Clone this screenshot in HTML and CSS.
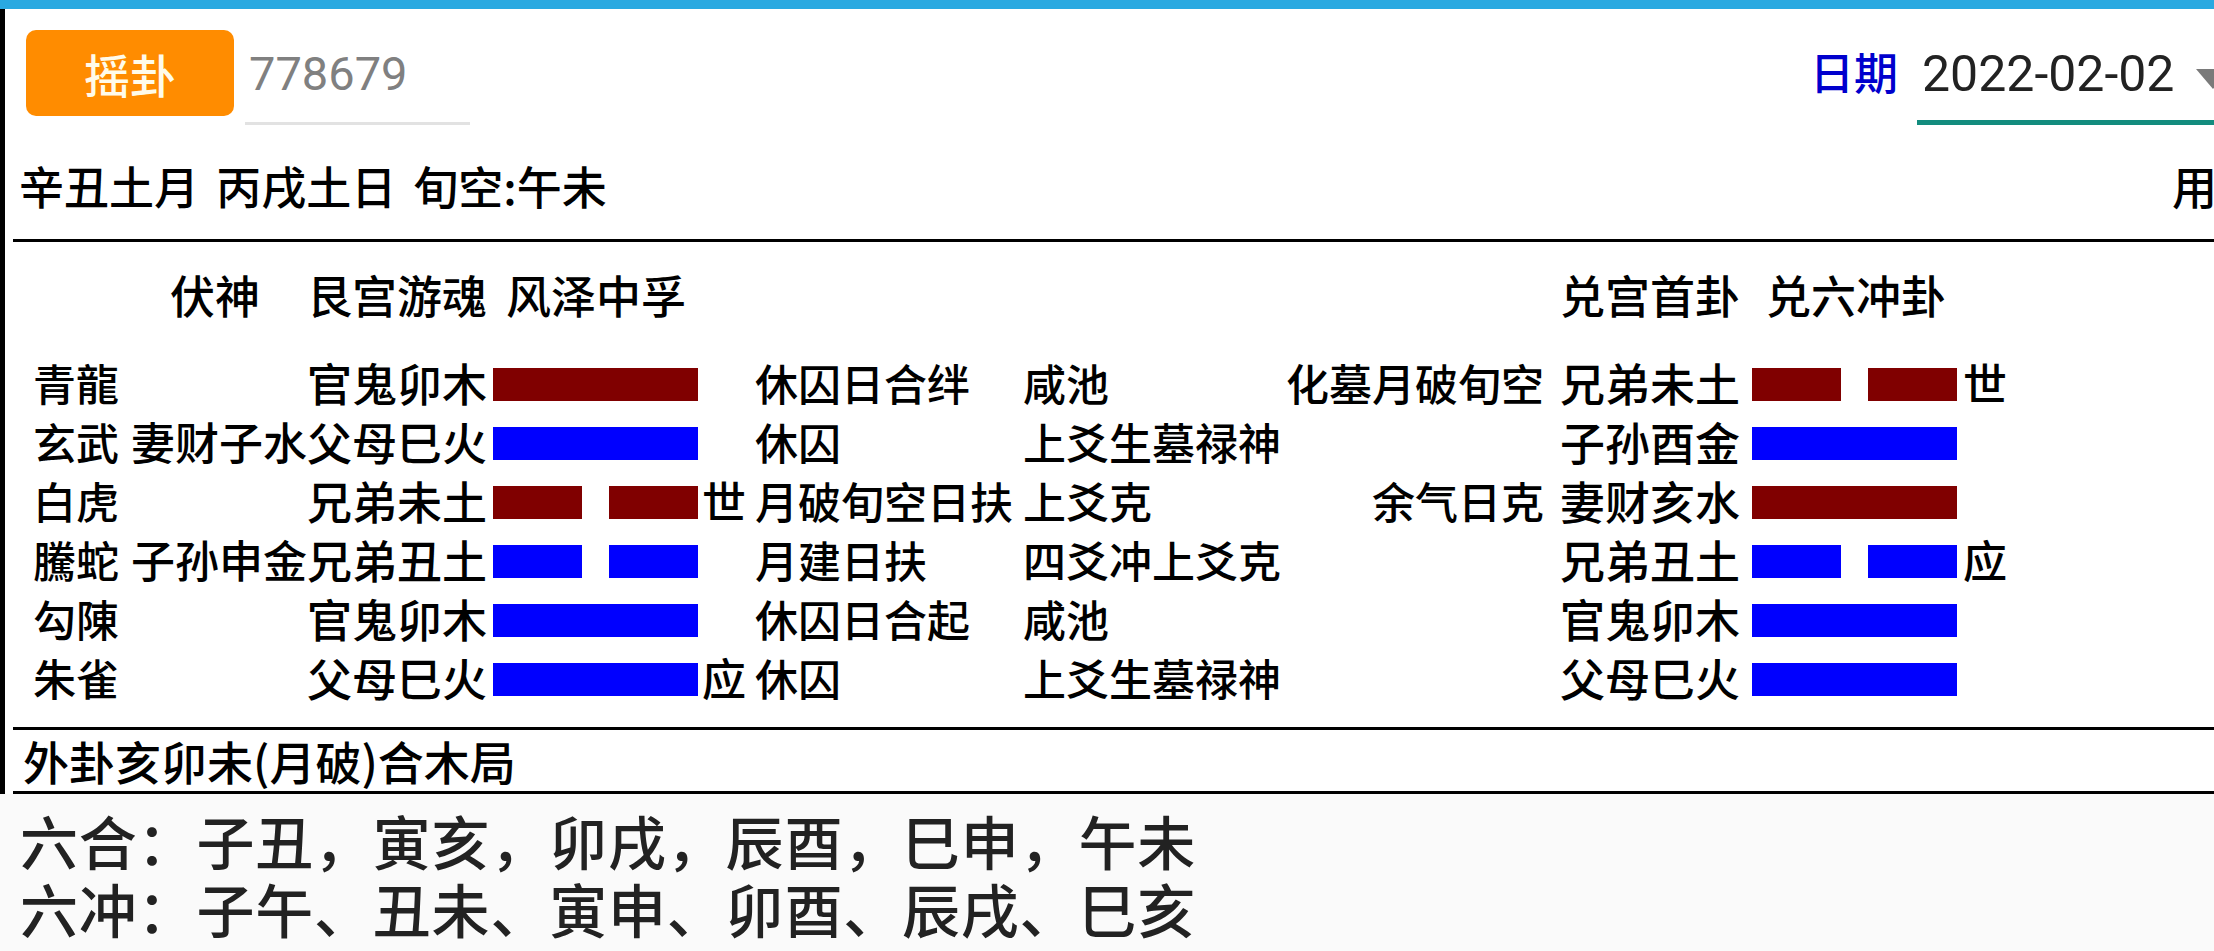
FILE: index.html
```html
<!DOCTYPE html>
<html lang="zh-CN">
<head>
<meta charset="utf-8">
<title>摇卦</title>
<link rel="stylesheet" href="styles.css">
</head>
<body>
<div class="topbar"></div>
<div class="main">
  <div class="toolbar">
    <button class="btn-shake">摇卦</button>
    <div class="num-field">778679</div>
    <div class="date-group">
      <span class="date-label">日期</span>
      <div class="date-field"><span class="date-value">2022-02-02</span><span class="caret"></span></div>
    </div>
  </div>
  <div class="status">
    <div class="status-left">辛丑土月 丙戌土日 旬空:午未</div>
    <div class="status-right">用神</div>
  </div>
  <div class="rule"></div>
  <div class="gua">
    <div class="gua-grid gua-head">
      <div class="head-fushen">伏神</div>
      <div class="head-left"><span>艮宫游魂</span><span>风泽中孚</span></div>
      <div class="head-right"><span>兑宫首卦</span><span>兑六冲卦</span></div>
    </div>

    <div class="gua-grid yao-row">
      <div class="c-god">青龍</div>
      <div class="c-name">官鬼卯木</div>
      <div class="c-bar line yang red"><i></i></div>
      <div class="c-state">休囚日合绊</div>
      <div class="c-move">咸池</div>
      <div class="c-info">化墓月破旬空</div>
      <div class="c-bname">兄弟未土</div>
      <div class="c-bbar line yin red"><i></i><i></i></div>
      <div class="c-bmark">世</div>
    </div>

    <div class="gua-grid yao-row">
      <div class="c-god">玄武</div>
      <div class="c-fu">妻财子水</div>
      <div class="c-name">父母巳火</div>
      <div class="c-bar line yang blue"><i></i></div>
      <div class="c-state">休囚</div>
      <div class="c-move">上爻生墓禄神</div>
      <div class="c-bname">子孙酉金</div>
      <div class="c-bbar line yang blue"><i></i></div>
    </div>

    <div class="gua-grid yao-row">
      <div class="c-god">白虎</div>
      <div class="c-name">兄弟未土</div>
      <div class="c-bar line yin red"><i></i><i></i></div>
      <div class="c-mark">世</div>
      <div class="c-state">月破旬空日扶</div>
      <div class="c-move">上爻克</div>
      <div class="c-info">余气日克</div>
      <div class="c-bname">妻财亥水</div>
      <div class="c-bbar line yang red"><i></i></div>
    </div>

    <div class="gua-grid yao-row">
      <div class="c-god">騰蛇</div>
      <div class="c-fu">子孙申金</div>
      <div class="c-name">兄弟丑土</div>
      <div class="c-bar line yin blue"><i></i><i></i></div>
      <div class="c-state">月建日扶</div>
      <div class="c-move">四爻冲上爻克</div>
      <div class="c-bname">兄弟丑土</div>
      <div class="c-bbar line yin blue"><i></i><i></i></div>
      <div class="c-bmark">应</div>
    </div>

    <div class="gua-grid yao-row">
      <div class="c-god">勾陳</div>
      <div class="c-name">官鬼卯木</div>
      <div class="c-bar line yang blue"><i></i></div>
      <div class="c-state">休囚日合起</div>
      <div class="c-move">咸池</div>
      <div class="c-bname">官鬼卯木</div>
      <div class="c-bbar line yang blue"><i></i></div>
    </div>

    <div class="gua-grid yao-row">
      <div class="c-god">朱雀</div>
      <div class="c-name">父母巳火</div>
      <div class="c-bar line yang blue"><i></i></div>
      <div class="c-mark">应</div>
      <div class="c-state">休囚</div>
      <div class="c-move">上爻生墓禄神</div>
      <div class="c-bname">父母巳火</div>
      <div class="c-bbar line yang blue"><i></i></div>
    </div>
  </div>
  <div class="rule"></div>
  <div class="summary">外卦亥卯未(月破)合木局</div>
  <div class="rule"></div>
</div>
<div class="footer">
  <div class="footer-line">六合：子丑，寅亥，卯戌，辰酉，巳申，午未</div>
  <div class="footer-line">六冲：子午、丑未、寅申、卯酉、辰戌、巳亥</div>
</div>
</body>
</html>
```

FILE: styles.css
```css
html, body {
  margin: 0;
  padding: 0;
}

body {
  width: 2214px;
  height: 951px;
  overflow: hidden;
  background: #ffffff;
  color: #000000;
  font-family: "Noto Sans CJK SC", "Noto Sans", sans-serif;
  font-size: 44px;
  font-weight: 500;
}

.topbar {
  height: 9px;
  background: #29a9e1;
}

.main {
  border-left: 5px solid #000000;
  overflow: hidden;
}

/* ---------- toolbar ---------- */
.toolbar {
  display: flex;
  align-items: flex-start;
  height: 121px;
  box-sizing: border-box;
  padding-top: 21px;
}

.btn-shake {
  width: 208px;
  height: 86px;
  margin: 0 0 0 21px;
  padding: 0;
  border: none;
  border-radius: 10px;
  background: #ff8c00;
  color: #fffbea;
  font-family: "Noto Sans CJK SC", sans-serif;
  font-size: 46px;
  font-weight: 500;
  line-height: 86px;
}

.num-field {
  width: 225px;
  height: 95px;
  box-sizing: border-box;
  margin-left: 11px;
  padding: 14px 0 18px 4px;
  border-bottom: 3px solid #e2e2e2;
  font-family: Roboto, "Liberation Sans", sans-serif;
  font-size: 47px;
  font-weight: 400;
  line-height: 60px;
  color: #808080;
}

.date-group {
  display: flex;
  align-items: flex-start;
  margin-left: auto;
  margin-right: -43px;
}

.date-label {
  margin-top: 11px;
  margin-right: 19px;
  font-size: 44px;
  line-height: 60px;
  color: #0000cd;
}

.date-field {
  display: flex;
  align-items: flex-start;
  width: 340px;
  height: 95px;
  box-sizing: border-box;
  padding: 14px 0 16px 5px;
  border-bottom: 5px solid #138c7e;
}

.date-value {
  font-family: Roboto, "Liberation Sans", sans-serif;
  font-size: 50px;
  font-weight: 400;
  line-height: 60px;
  color: #222222;
}

.caret {
  width: 0;
  height: 0;
  margin-top: 25px;
  margin-left: 22px;
  border-left: 17px solid transparent;
  border-right: 17px solid transparent;
  border-top: 20px solid #7a7a7a;
}

/* ---------- status line ---------- */
.status {
  display: grid;
  grid-template-columns: 1fr 42px;
  height: 109px;
  box-sizing: border-box;
  padding-top: 26px;
  font-size: 45px;
  line-height: 60px;
}

.status-left {
  padding-left: 14px;
  word-spacing: 7px;
  white-space: nowrap;
}

.status-right {
  overflow: hidden;
  white-space: nowrap;
}

.rule {
  height: 3px;
  margin-left: 8px;
  background: #000000;
}

/* ---------- gua table ---------- */
.gua {
  padding: 23px 0 20px 28px;
}

.gua-grid {
  display: grid;
  grid-template-columns: 98px 176px 186px 209px 53px 268px 264px 273px 192px 211px 1fr;
  height: 59px;
  line-height: 59px;
  white-space: nowrap;
}

.gua-head {
  margin-bottom: 29px;
  font-size: 45px;
}

.head-fushen {
  grid-column: 2;
  padding-left: 39px;
}

.head-left {
  grid-column: 3 / span 4;
  display: flex;
  gap: 19px;
}

.head-right {
  grid-column: 9 / span 3;
  display: flex;
  gap: 26px;
}

.c-god   { grid-column: 1; font-size: 43px; }
.c-fu    { grid-column: 2; font-size: 44px; }
.c-name  { grid-column: 3; font-size: 45px; }
.c-bar   { grid-column: 4; }
.c-mark  { grid-column: 5; font-size: 44px; }
.c-state { grid-column: 6; font-size: 43px; }
.c-move  { grid-column: 7; font-size: 43px; }
.c-info  {
  grid-column: 8;
  display: flex;
  justify-content: flex-end;
  padding-right: 16px;
  font-size: 43px;
}
.c-bname { grid-column: 9; font-size: 45px; }
.c-bbar  { grid-column: 10; }
.c-bmark { grid-column: 11; font-size: 44px; }

.line {
  display: flex;
  justify-content: space-between;
  align-self: center;
  width: 205px;
  height: 33px;
  margin-top: 3px;
}

.line i {
  display: block;
  height: 100%;
}

.line.yang i {
  width: 100%;
}

.line.yin i {
  width: 89px;
}

.line.red i {
  background: #800000;
}

.line.blue i {
  background: #0000ff;
}

/* ---------- summary ---------- */
.summary {
  height: 61px;
  padding-left: 18px;
  font-size: 46px;
  line-height: 61px;
  white-space: nowrap;
}

/* ---------- footer ---------- */
.footer {
  height: 157px;
  box-sizing: border-box;
  padding: 12px 0 0 20px;
  background: #fafafa;
  color: #222222;
  font-size: 58px;
  line-height: 68px;
  letter-spacing: 0.8px;
  white-space: nowrap;
}
```
